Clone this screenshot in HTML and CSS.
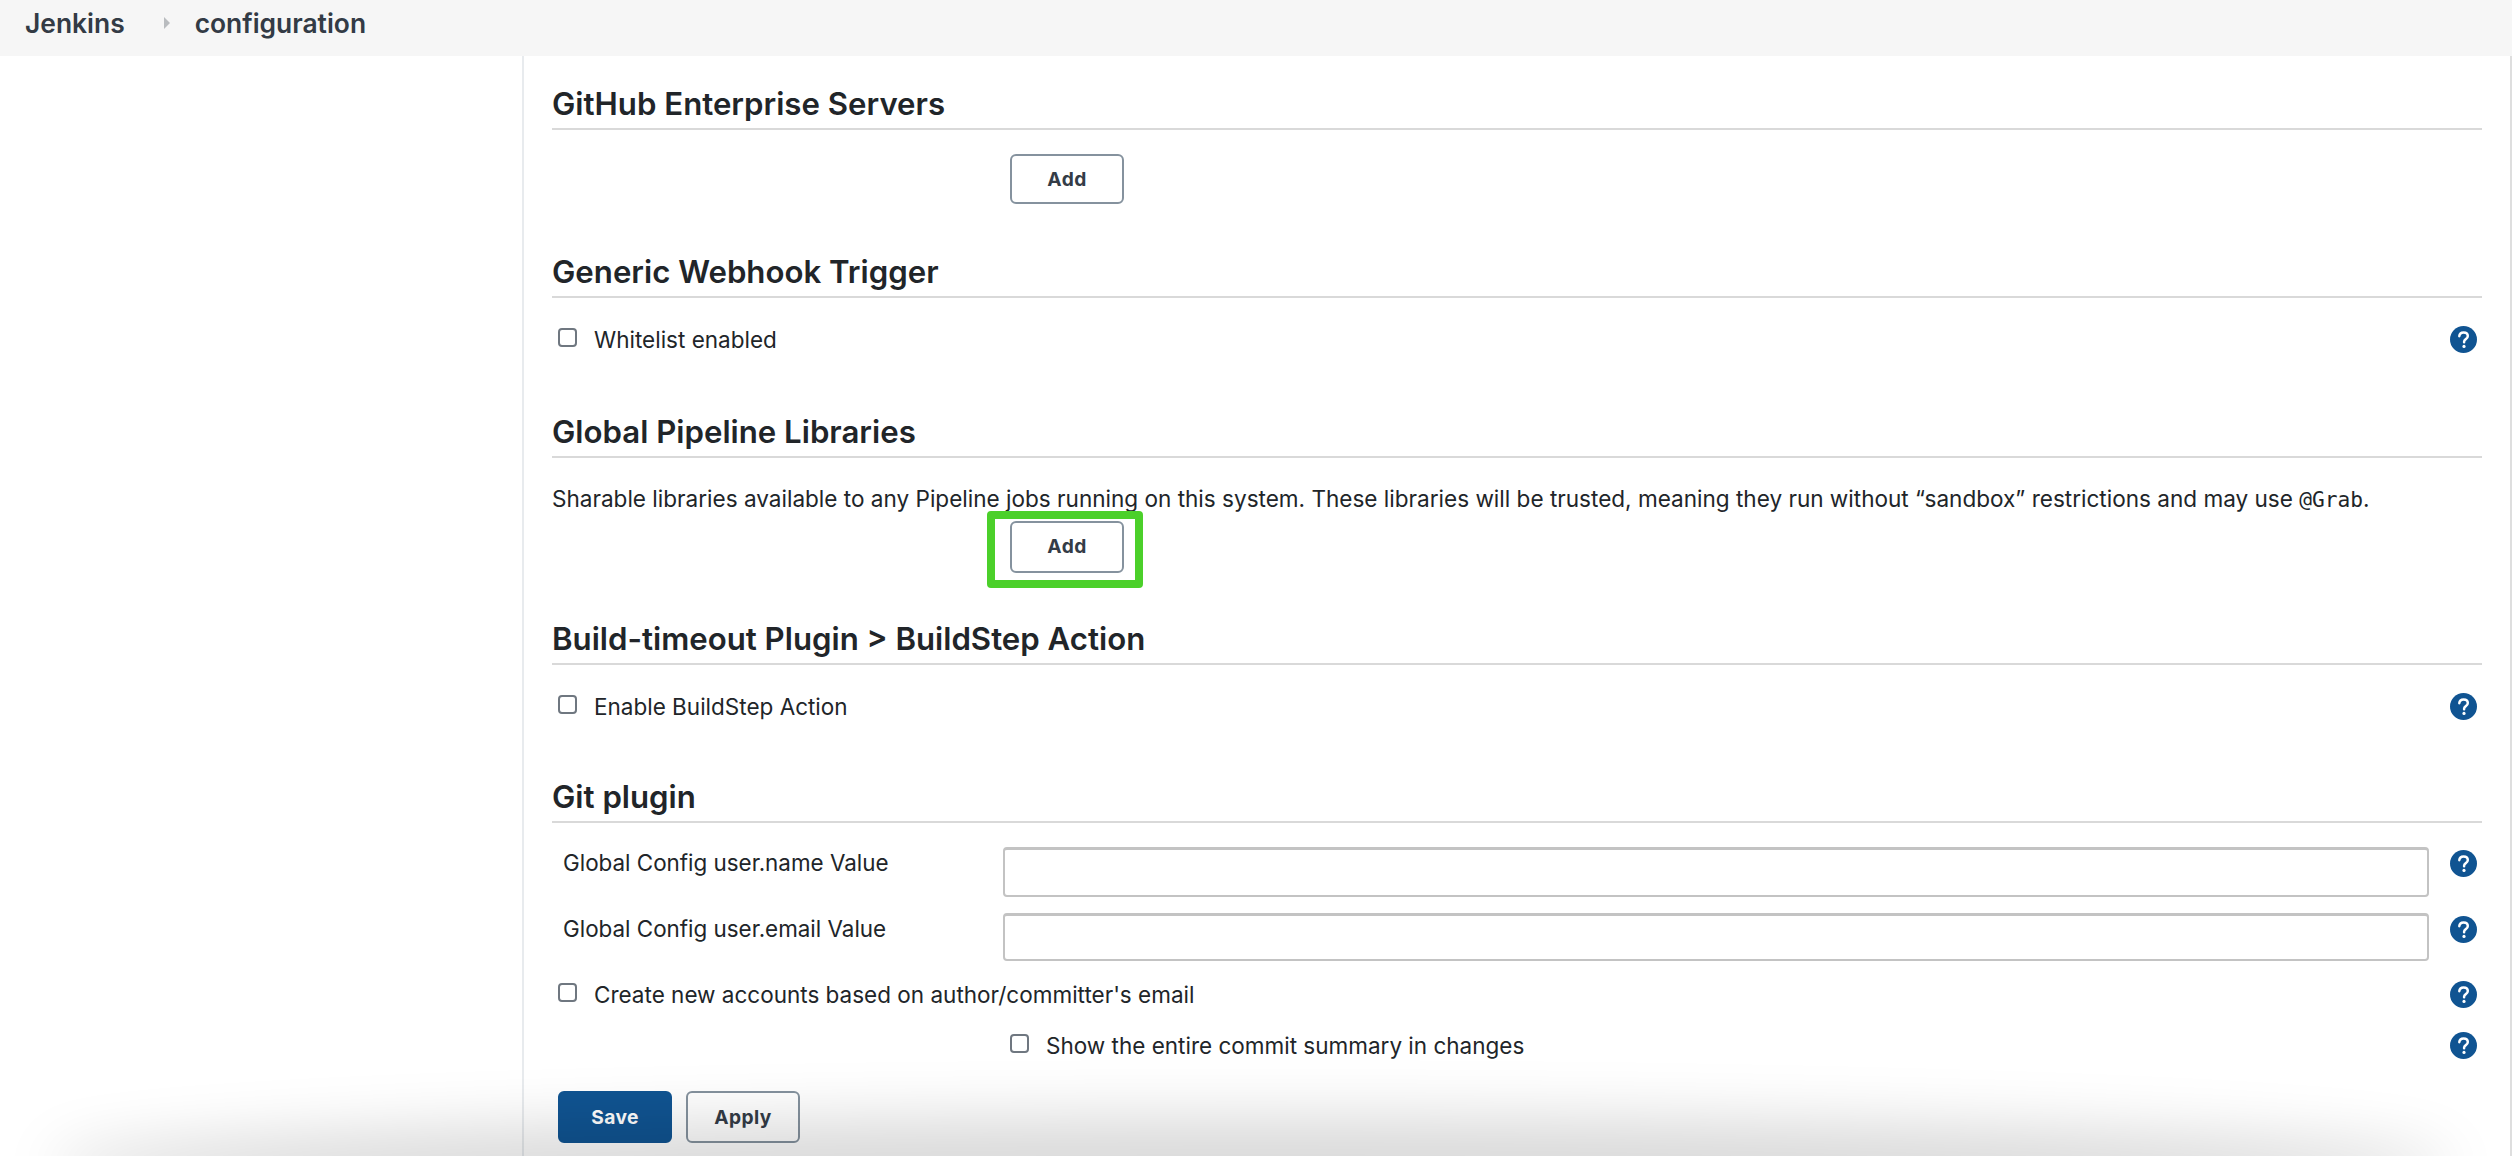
FILE: index.html
```html
<!DOCTYPE html>
<html>
<head lang="en">
    <meta charset="UTF-8">
    <title>configuration [Jenkins]</title>
    <link rel="stylesheet" href="styles.css">
</head>
<body>
    <div id="breadcrumb">
        <a class="crumb crumb-first">Jenkins</a>
        <svg class="crumb-arrow" viewBox="0 0 8 14"><path d="M1 1l6 6-6 6z"/></svg>
        <a class="crumb">configuration</a>
    </div>
    <div id="page">
        <div id="side"></div>
        <div id="main">
            <div class="section s1">
                <div class="title">GitHub Enterprise Servers</div>
                <button class="btn add add-plain">Add</button>
            </div>
            <div class="section s2">
                <div class="title">Generic Webhook Trigger</div>
                <div class="check-row row-top">
                    <input type="checkbox" class="check"/>
                    <label>Whitelist enabled</label>
                    <svg class="help" viewBox="0 0 27 27"><use href="#help-icon"/></svg>
                </div>
            </div>
            <div class="section s3">
                <div class="title">Global Pipeline Libraries</div>
                <div class="desc">Sharable libraries available to any Pipeline jobs running on this system. These libraries will be trusted, meaning they run without “sandbox” restrictions and may use <code>@Grab</code>.</div>
                <div class="add-wrap">
                    <button class="btn add">Add</button>
                    <div class="mark"></div>
                </div>
            </div>
            <div class="section s4">
                <div class="title">Build-timeout Plugin &gt; BuildStep Action</div>
                <div class="check-row row-top">
                    <input type="checkbox" class="check"/>
                    <label>Enable BuildStep Action</label>
                    <svg class="help" viewBox="0 0 27 27"><use href="#help-icon"/></svg>
                </div>
            </div>
            <div class="section s5">
                <div class="title">Git plugin</div>
                <div class="field field-name">
                    <label>Global Config user.name Value</label>
                    <input type="text" class="text-input"/>
                    <svg class="help" viewBox="0 0 27 27"><use href="#help-icon"/></svg>
                </div>
                <div class="field field-email">
                    <label>Global Config user.email Value</label>
                    <input type="text" class="text-input"/>
                    <svg class="help" viewBox="0 0 27 27"><use href="#help-icon"/></svg>
                </div>
                <div class="check-row row-create">
                    <input type="checkbox" class="check"/>
                    <label>Create new accounts based on author/committer's email</label>
                    <svg class="help" viewBox="0 0 27 27"><use href="#help-icon"/></svg>
                </div>
                <div class="check-row row-show">
                    <input type="checkbox" class="check"/>
                    <label>Show the entire commit summary in changes</label>
                    <svg class="help" viewBox="0 0 27 27"><use href="#help-icon"/></svg>
                </div>
                <div class="actions">
                    <button class="btn primary">Save</button>
                    <button class="btn">Apply</button>
                </div>
            </div>
        </div>
    </div>
    <div id="bottom-shadow"></div>
    <svg class="defs" width="0" height="0">
        <symbol id="help-icon" viewBox="0 0 27 27">
            <circle cx="13.5" cy="13.5" r="13.5" fill="#105492"/>
            <path d="M9.3 10.2c.2-2.4 1.9-3.8 4.3-3.8 2.5 0 4.2 1.5 4.2 3.5 0 1.5-.8 2.4-2 3.2-1.2.8-1.7 1.4-1.7 2.7v.5" fill="none" stroke="#fff" stroke-width="2.5" stroke-linecap="round"/>
            <circle cx="14" cy="20.4" r="1.6" fill="#fff"/>
        </symbol>
    </svg>
</body>
</html>
```

FILE: styles.css
```css
*{
    margin: 0;
    padding: 0;
    box-sizing: border-box;
}
html,body{
    height: 100%;
    overflow: hidden;
}
body{
    position: relative;
    background: #fff;
    color: #212529;
    font-family: Inter, "Liberation Sans", sans-serif;
    font-size: 22.5px;
}
.defs{
    position: absolute;
}
#breadcrumb{
    height: 56px;
    padding: 0 0 11px 25px;
    background: #f6f6f6;
    display: flex;
    align-items: center;
    color: #333b45;
    font-size: 26.4px;
    font-weight: 600;
}
.crumb-arrow{
    width: 8px;
    height: 14px;
    margin: 0 24px 0 38px;
    fill: #b9bcbf;
}
#page{
    display: flex;
}
#side{
    width: 524px;
    height: 1100px;
    border-right: 2px solid #e8ebee;
}
#main{
    width: 1988px;
    height: 1100px;
    padding: 28px 28px 0;
    border-right: 2px solid #dedede;
}
.title{
    height: 46px;
    padding-bottom: 4px;
    line-height: 41px;
    border-bottom: 2px solid #d9d9d9;
    font-size: 31.2px;
    font-weight: 600;
    color: #212529;
}
.s1{
    padding-bottom: 48px;
}
.s2{
    padding-bottom: 59px;
}
.s3{
    padding-bottom: 46px;
}
.s4{
    padding-bottom: 57px;
}
.btn{
    width: 114px;
    height: 52px;
    background: transparent;
    border: 2px solid #85929e;
    border-radius: 6px;
    color: #343c47;
    font-family: inherit;
    font-size: 19.2px;
    font-weight: 700;
    letter-spacing: .4px;
}
.add{
    display: block;
    padding-bottom: 2px;
}
.add-plain{
    height: 50px;
    margin: 24px 0 0 458px;
    padding-bottom: 0;
}
.primary{
    background: #105492;
    border-color: #105492;
    color: #fff;
}
.check-row{
    height: 28px;
    padding: 0 5px 0 6px;
    display: flex;
    align-items: center;
}
.check-row label{
    padding-top: 1px;
}
.row-top{
    margin-top: 27px;
}
.row-create{
    margin-top: 19px;
}
.row-show{
    margin-top: 23px;
    padding-left: 458px;
}
.check{
    appearance: none;
    width: 19px;
    height: 19px;
    margin-right: 17px;
    margin-bottom: 4px;
    background: #fff;
    border: 2px solid #6f7780;
    border-radius: 4px;
    flex: none;
}
.help{
    width: 27px;
    height: 27px;
    margin-left: auto;
    flex: none;
}
.desc{
    margin-top: 25px;
    line-height: 32px;
    font-size: 22.56px;
}
.desc code{
    font-family: "DejaVu Sans Mono", monospace;
    font-size: 21.2px;
}
.add-wrap{
    position: relative;
    width: 114px;
    margin: 5px 0 0 458px;
}
.mark{
    position: absolute;
    left: -23px;
    top: -10px;
    width: 156px;
    height: 77px;
    border: 8px solid #4bd02a;
    border-radius: 4px;
}
.field{
    display: grid;
    grid-template-columns: 451px 1fr 53px;
    align-items: start;
}
.field label{
    padding-left: 11px;
    line-height: 32px;
    font-size: 22.4px;
}
.field .help{
    margin: 3px 5px 0 auto;
}
.field-name{
    height: 50px;
    margin-top: 24px;
}
.field-email{
    height: 48px;
    margin-top: 16px;
}
.text-input{
    width: 100%;
    height: 100%;
    background: #fff;
    border: 2px solid #c3c3c3;
    border-top-width: 3px;
    border-radius: 4px;
}
.actions{
    margin-top: 32px;
    padding-left: 6px;
    display: flex;
    gap: 14px;
}
#bottom-shadow{
    position: absolute;
    left: 80px;
    right: 90px;
    top: 1156px;
    height: 40px;
    border-radius: 50%;
    box-shadow: 0 -10px 60px 30px rgba(0,0,0,.15);
    pointer-events: none;
}
```
